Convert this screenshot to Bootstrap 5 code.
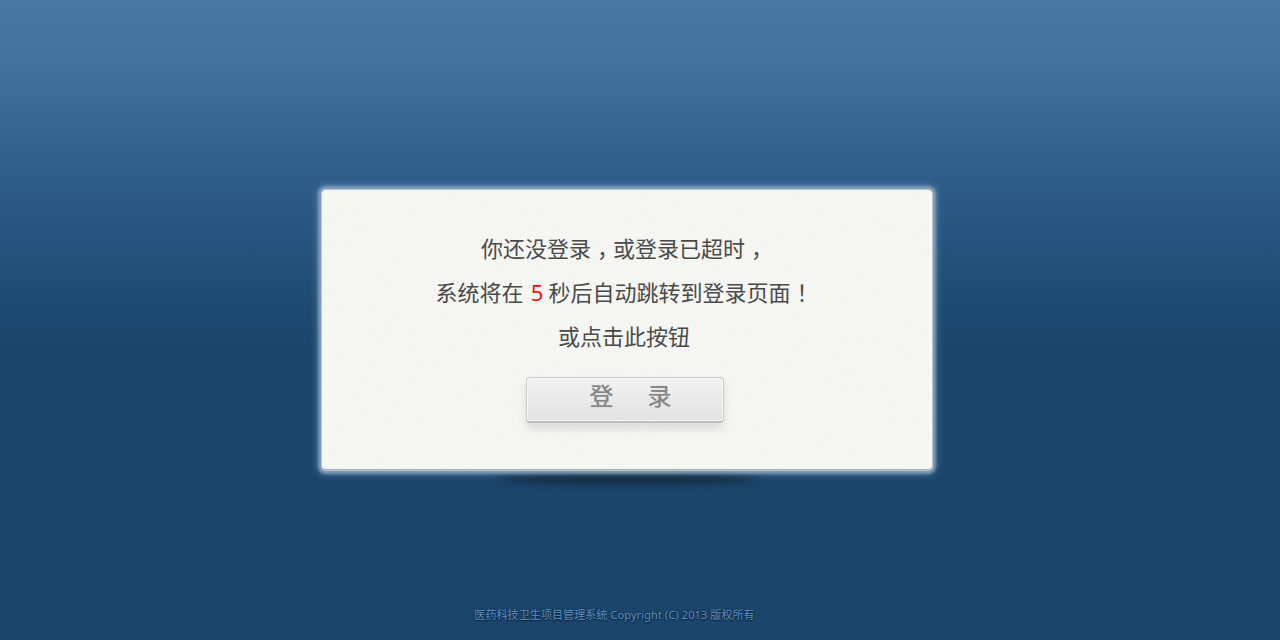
<!DOCTYPE html>
<html lang="zh">
<head>
<meta charset="utf-8">
<title>登录超时</title>
<link href="https://cdn.jsdelivr.net/npm/bootstrap@5.3.0/dist/css/bootstrap.min.css" rel="stylesheet">
<style>
html,body{height:100%;margin:0;overflow:hidden}
body{background:linear-gradient(180deg,#4a78a4 0,#44729f 60px,#2f5e8a 170px,#1f4c75 290px,#1b456b 350px,#1b456b 100%);font-family:"Liberation Sans","Noto Sans CJK SC",sans-serif}
.stage{height:640px;padding-top:190px}
.notice{position:relative;width:610px;height:280px;margin-left:322px;background:#f8f8f5;border-radius:4px;border-bottom:1px solid #a9adad;box-shadow:0 0 0 1px rgba(205,215,222,.7),0 0 3px 4px rgba(155,180,205,.72),0 0 7px 6px rgba(130,165,198,.3);padding-top:38px;padding-right:6px;text-align:center}
.notice::after{content:"";position:absolute;z-index:-1;left:175px;right:175px;bottom:-14px;height:12px;border-radius:50%;background:rgba(10,20,30,.68);filter:blur(4px)}
.grain{position:absolute;left:0;top:0;width:100%;height:100%;border-radius:4px;pointer-events:none}
.msg{position:relative;font-size:22px;line-height:44px;color:#4a4a4a;margin:0;height:44px}
.msg b{font-weight:400;color:#f00;font-family:"Open Sans","Liberation Sans",sans-serif;line-height:0;margin-left:1px;margin-right:-1px}
.pun{font-feature-settings:"halt";margin-left:6px;margin-right:5px}
.enter{position:relative;display:block;width:198px;height:46px;margin:17px 0 0 204px;padding:0 0 5px 11px;border:1px solid #c9c9c5;border-bottom:2px solid #bdbdb9;border-radius:4px;background:linear-gradient(180deg,#f3f3f3,#e1e1e1);box-shadow:inset 0 0 0 1px #f8f8f8,0 6px 9px rgba(90,90,90,.16);font-size:24px;font-weight:400;line-height:36px;color:#858585;text-align:center;text-shadow:0 0 1px #a0a0a0}
.enter:hover{background:linear-gradient(180deg,#f3f3f3,#e1e1e1);color:#858585;border-color:#c9c9c5}
.enter span{margin-left:34px}
.legal{position:relative;height:20px;margin-top:135px;padding-right:51px;font-family:"Noto Sans","Noto Sans CJK SC",sans-serif;font-size:11px;letter-spacing:.1px;line-height:20px;color:#5c92c8;text-align:center;text-shadow:0 1px 1px #0c2035,0 0 2px #0e2338}
</style>
</head>
<body>
<main class="stage">
  <section class="notice">
    <svg class="grain" aria-hidden="true"><filter id="paper"><feTurbulence type="fractalNoise" baseFrequency="0.7" numOctaves="3" seed="4"/><feColorMatrix values="0 0 0 0 .55 0 0 0 0 .55 0 0 0 0 .5 0 0 0 .22 -.06"/></filter><rect width="100%" height="100%" filter="url(#paper)"/></svg>
    <p class="msg">你还没登录<span class="pun">，</span>或登录已超时<span class="pun">，</span></p>
    <p class="msg">系统将在 <b>5</b> 秒后自动跳转到登录页面<span class="pun">！</span></p>
    <p class="msg">或点击此按钮</p>
    <button type="button" class="btn enter">登<span>录</span></button>
  </section>
  <footer class="legal">医药科技卫生项目管理系统 Copyright (C) 2013 版权所有</footer>
</main>
<script src="https://cdn.jsdelivr.net/npm/bootstrap@5.3.0/dist/js/bootstrap.bundle.min.js"></script>
</body>
</html>
